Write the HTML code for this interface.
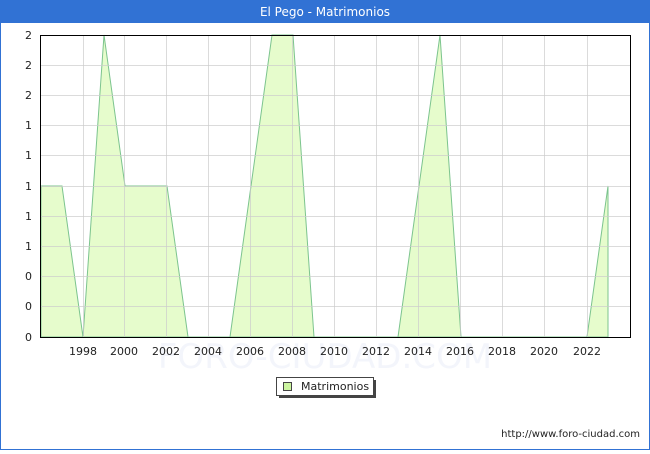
<!DOCTYPE html>
<html><head><meta charset="utf-8"><style>
body{margin:0;width:650px;height:450px;overflow:hidden;background:#fff;font-family:"DejaVu Sans","Liberation Sans",sans-serif}
</style></head><body>
<svg width="650" height="450" xmlns="http://www.w3.org/2000/svg" font-family="DejaVu Sans, Liberation Sans, sans-serif">
<rect x="0" y="0" width="650" height="450" fill="#fff"/>
<rect x="0.5" y="0.5" width="649" height="449" fill="none" stroke="#3172d4" stroke-width="1"/>
<rect x="0" y="0" width="650" height="23" fill="#3172d4"/>
<text x="325" y="16" fill="#fff" font-size="12" text-anchor="middle">El Pego - Matrimonios</text>
<text x="325" y="368" fill="#f3f5fb" font-size="34" text-anchor="middle">FORO-CIUDAD.COM</text>
<polygon fill="#e6fccc" stroke="#7cc48e" stroke-width="1" points="41,337 41,186 62,186 83,337 104,35 125,186 146,186 167,186 188,337 209,337 230,337 251,186 272,35 293,35 314,337 335,337 356,337 377,337 398,337 419,186 440,35 461,337 482,337 503,337 524,337 545,337 566,337 587,337 608,186 608,337"/>
<g stroke="#cccccc" stroke-opacity="0.7" stroke-width="1">
<line x1="40" y1="65.5" x2="630" y2="65.5"/><line x1="40" y1="95.5" x2="630" y2="95.5"/><line x1="40" y1="125.5" x2="630" y2="125.5"/><line x1="40" y1="155.5" x2="630" y2="155.5"/><line x1="40" y1="186.5" x2="630" y2="186.5"/><line x1="40" y1="216.5" x2="630" y2="216.5"/><line x1="40" y1="246.5" x2="630" y2="246.5"/><line x1="40" y1="276.5" x2="630" y2="276.5"/><line x1="40" y1="306.5" x2="630" y2="306.5"/>
<line x1="83.5" y1="35" x2="83.5" y2="337"/><line x1="124.5" y1="35" x2="124.5" y2="337"/><line x1="166.5" y1="35" x2="166.5" y2="337"/><line x1="208.5" y1="35" x2="208.5" y2="337"/><line x1="250.5" y1="35" x2="250.5" y2="337"/><line x1="292.5" y1="35" x2="292.5" y2="337"/><line x1="334.5" y1="35" x2="334.5" y2="337"/><line x1="376.5" y1="35" x2="376.5" y2="337"/><line x1="418.5" y1="35" x2="418.5" y2="337"/><line x1="460.5" y1="35" x2="460.5" y2="337"/><line x1="502.5" y1="35" x2="502.5" y2="337"/><line x1="544.5" y1="35" x2="544.5" y2="337"/><line x1="587.5" y1="35" x2="587.5" y2="337"/>
</g>
<rect x="40.5" y="35.5" width="590" height="302" fill="none" stroke="#000" stroke-width="1"/>
<g font-size="11" fill="#222" text-anchor="end">
<text x="32" y="39">2</text><text x="32" y="69">2</text><text x="32" y="99">2</text><text x="32" y="129">1</text><text x="32" y="159">1</text><text x="32" y="190">1</text><text x="32" y="220">1</text><text x="32" y="250">1</text><text x="32" y="280">0</text><text x="32" y="310">0</text><text x="32" y="341">0</text>
</g>
<g font-size="11" fill="#222" text-anchor="middle">
<text x="83" y="355">1998</text><text x="124" y="355">2000</text><text x="166" y="355">2002</text><text x="208" y="355">2004</text><text x="250" y="355">2006</text><text x="292" y="355">2008</text><text x="334" y="355">2010</text><text x="376" y="355">2012</text><text x="418" y="355">2014</text><text x="460" y="355">2016</text><text x="502" y="355">2018</text><text x="544" y="355">2020</text><text x="587" y="355">2022</text>
</g>
<rect x="279" y="380" width="97" height="18" fill="#444"/>
<rect x="276.5" y="377.5" width="97" height="18" fill="#fff" stroke="#444"/>
<rect x="283.5" y="382.5" width="8" height="8" fill="#ccf5a0" stroke="#444"/>
<text x="301" y="390" font-size="11" fill="#222">Matrimonios</text>
<text x="640" y="437" font-size="10" fill="#222" text-anchor="end">http://www.foro-ciudad.com</text>
</svg>
</body></html>
